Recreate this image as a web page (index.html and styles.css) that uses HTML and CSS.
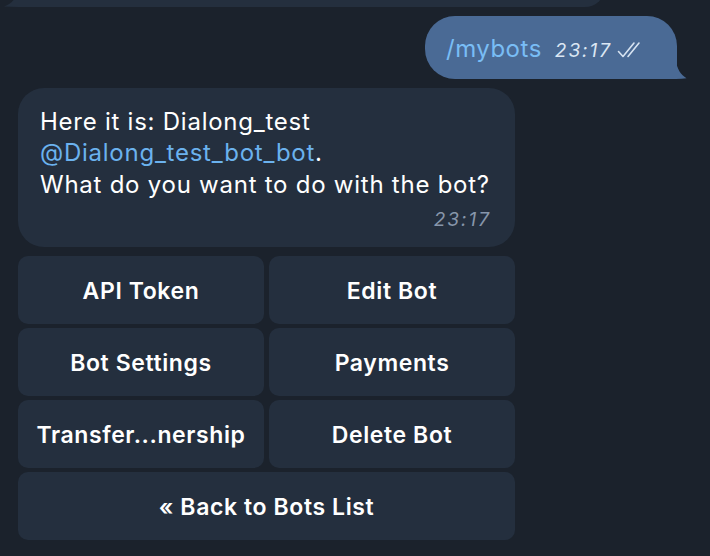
FILE: index.html
```html
<!DOCTYPE html>
<html>
<head>
<meta charset="utf-8">
<link rel="stylesheet" href="styles.css">
</head>
<body>
<div class="chat">
  <div class="bubble prev">
    <svg class="tail-left" width="14" height="18" viewBox="0 0 14 18"><path d="M14 0 C13 8 9 14 0 17.6 Q6 18 14 18 Z" fill="#242f3e"/></svg>
  </div>
  <div class="bubble out">
    <span class="cmd">/mybots</span>
    <span class="meta"><span class="time">23:17</span>
      <svg class="checks" width="28" height="18" viewBox="0 0 28 18"><path d="M1.5 10.5 L6 15.5 L17 2 M11 15.5 L22 2" fill="none" stroke="#d7e3f1" stroke-width="1.6" stroke-linecap="round" stroke-linejoin="round"/></svg>
    </span>
    <svg class="tail-right" width="11" height="18" viewBox="0 0 11 18"><path d="M0 0 C1 8 5 14 10.5 17.2 Q6 18 0 18 Z" fill="#4a6a95"/></svg>
  </div>
  <div class="bubble in">
    <div class="text">Here it is: Dialong_test<br><span class="link">@Dialong_test_bot_bot</span>.<br>What do you want to do with the bot?</div>
    <div class="in-time">23:17</div>
  </div>
  <div class="keyboard">
    <div class="btn">API Token</div>
    <div class="btn">Edit Bot</div>
    <div class="btn">Bot Settings</div>
    <div class="btn">Payments</div>
    <div class="btn">Transfer...nership</div>
    <div class="btn">Delete Bot</div>
    <div class="btn wide">« Back to Bots List</div>
  </div>
</div>
</body>
</html>
```
FILE: styles.css
```css
html, body {
  margin: 0;
  padding: 0;
  background: #1b222c;
  width: 710px;
  height: 556px;
  overflow: hidden;
  font-family: Inter, "Noto Sans", sans-serif;
  color: #ffffff;
}
.chat {
  display: flex;
  flex-direction: column;
  align-items: flex-start;
  padding-left: 18px;
}
.bubble {
  position: relative;
}
.prev {
  width: 587px;
  height: 40px;
  margin-top: -33px;
  background: #242f3e;
  border-radius: 24px 24px 24px 0;
}
.tail-left {
  position: absolute;
  left: -14px;
  bottom: 0;
}
.out {
  align-self: flex-end;
  margin-right: 33px;
  margin-top: 9px;
  height: 63px;
  box-sizing: border-box;
  width: 252px;
  background: #4a6a95;
  border-radius: 30px 30px 0 30px;
  display: flex;
  align-items: center;
  padding-left: 21px;
  padding-top: 2px;
}
.cmd {
  font-size: 24px;
  color: #79bdf5;
  letter-spacing: 0.5px;
}
.meta {
  display: flex;
  align-items: center;
  margin-left: 13px;
  margin-top: 4px;
}
.time {
  font-size: 19px;
  font-style: italic;
  color: #dbe6f3;
  letter-spacing: 2px;
}
.checks {
  margin-left: 5px;
  margin-top: -2px;
}
.tail-right {
  position: absolute;
  right: -10px;
  bottom: 0;
}
.in {
  margin-top: 9px;
  width: 497px;
  box-sizing: border-box;
  background: #242f3e;
  border-radius: 26px;
  padding: 17.5px 24px 16px 22px;
}
.text {
  font-size: 24px;
  line-height: 31.5px;
  letter-spacing: 0.75px;
}
.link {
  color: #6bb2ee;
}
.in-time {
  margin-top: 9px;
  text-align: right;
  font-size: 19px;
  line-height: 22px;
  font-style: italic;
  color: #8796aa;
  letter-spacing: 2px;
}
.keyboard {
  margin-top: 9px;
  width: 497px;
  display: grid;
  grid-template-columns: 1fr 1fr;
  grid-auto-rows: 68px;
  gap: 4px 5px;
}
.btn {
  background: #242f3e;
  border-radius: 10px;
  display: flex;
  align-items: center;
  justify-content: center;
  font-size: 23px;
  font-weight: 600;
  letter-spacing: 0.6px;
  padding-top: 2px;
}
.wide {
  grid-column: 1 / 3;
}
```
